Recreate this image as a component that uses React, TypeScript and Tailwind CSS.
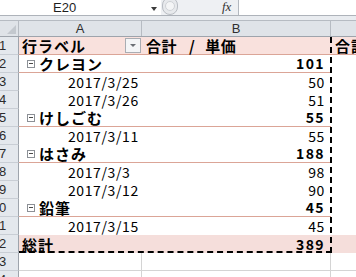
import React from "react";

type Row = { kind: "header" | "group" | "item" | "total" | "blank"; label?: string; val?: string };

const rows: Row[] = [
  { kind: "header" },
  { kind: "group", label: "クレヨン", val: "101" },
  { kind: "item", label: "2017/3/25", val: "50" },
  { kind: "item", label: "2017/3/26", val: "51" },
  { kind: "group", label: "けしごむ", val: "55" },
  { kind: "item", label: "2017/3/11", val: "55" },
  { kind: "group", label: "はさみ", val: "188" },
  { kind: "item", label: "2017/3/3", val: "98" },
  { kind: "item", label: "2017/3/12", val: "90" },
  { kind: "group", label: "鉛筆", val: "45" },
  { kind: "item", label: "2017/3/15", val: "45" },
  { kind: "total", label: "総計", val: "389" },
  { kind: "blank" },
  { kind: "blank" },
];

const labels = ["1", "2", "3", "4", "5", "6", "7", "8", "9", "0", "1", "2", "3", "4"];

const jp = { fontFamily: '"Noto Sans CJK JP", "Noto Sans", sans-serif' };

function Minus() {
  return (
    <span className="mr-[4px] inline-flex h-[8px] w-[8px] items-center justify-center border border-[#8c9096] bg-white">
      <span className="h-[1px] w-[4px] bg-[#4a4a4a]" />
    </span>
  );
}

function DataRow({ r, idx }: { r: Row; idx: number }) {
  const rowHead = (
    <div className="relative h-[18px] w-[19px] shrink-0 overflow-hidden border-b border-r border-b-[#c9ced5] border-r-[#9ea4ac] bg-[#e4e8ed]">
      <span
        className="absolute left-[-1px] top-[1px] text-[13px] leading-[16px] text-[#2b2b2b]"
        style={{ fontFamily: '"Liberation Sans", sans-serif' }}
      >
        {labels[idx]}
      </span>
    </div>
  );

  if (r.kind === "header") {
    return (
      <div className="flex h-[18px]">
        {rowHead}
        <div className="flex h-[18px] w-[123px] shrink-0 items-center justify-between border-b border-[#dba597] bg-[#f9e1dd] pl-[3px] pr-[1px]">
          <span className="text-[15px] font-bold leading-[17px] tracking-[1px] text-black" style={jp}>
            行ラベル
          </span>
          <span className="flex h-[15px] w-[16px] items-center justify-center border border-[#a9adb3] bg-[#f4f5f7]">
            <span className="h-0 w-0 border-x-[3px] border-t-[3px] border-x-transparent border-t-[#6b6f75]" />
          </span>
        </div>
        <div className="flex h-[18px] w-[189px] shrink-0 items-center border-b border-[#dba597] bg-[#f9e1dd] pl-[4px]">
          <span className="flex items-center text-[15px] font-bold leading-[17px] tracking-[0.5px] text-black" style={jp}>
            <span>合計</span>
            <span className="ml-[12px] mr-[10px]">/</span>
            <span>単価</span>
          </span>
        </div>
        <div className="flex h-[18px] flex-1 items-center overflow-hidden whitespace-nowrap border-b border-[#dba597] bg-[#f9e1dd] pl-[4px]">
          <span className="text-[15px] font-bold leading-[17px] tracking-[1px] text-black" style={jp}>
            合計
          </span>
        </div>
      </div>
    );
  }

  if (r.kind === "blank") {
    return (
      <div className="flex h-[18px]">
        {rowHead}
        <div className="h-[18px] w-[123px] shrink-0 border-b border-r border-[#d4d4d4] bg-white" />
        <div className="h-[18px] w-[189px] shrink-0 border-b border-r border-[#d4d4d4] bg-white" />
        <div className="h-[18px] flex-1 border-b border-[#d4d4d4] bg-white" />
      </div>
    );
  }

  const isGroup = r.kind === "group";
  const isTotal = r.kind === "total";
  const bg = isTotal ? "bg-[#f5dedb]" : "bg-white";
  const line = isGroup ? "border-b border-[#dba597]" : "";

  return (
    <div className="flex h-[18px]">
      {rowHead}
      <div className={`flex h-[18px] w-[123px] shrink-0 items-center ${bg} ${line} ${isTotal ? "pl-[3px]" : isGroup ? "pl-[8px]" : "pl-[49px]"}`}>
        {isGroup && <Minus />}
        <span
          className={`whitespace-nowrap text-black ${isGroup || isTotal ? "text-[15px] font-bold tracking-[1px]" : "text-[14px] tracking-[0.6px]"} leading-[17px]`}
          style={jp}
        >
          {r.label}
        </span>
      </div>
      <div className={`flex h-[18px] w-[189px] shrink-0 items-center justify-end pr-[6px] ${bg} ${line}`}>
        <span
          className={`text-black ${isGroup || isTotal ? "text-[14px] font-bold tracking-[1.4px]" : "text-[14px] tracking-[0.6px]"} leading-[17px]`}
          style={jp}
        >
          {r.val}
        </span>
      </div>
      <div className={`h-[18px] flex-1 ${isTotal ? "bg-[#f5dedb]" : "bg-white"}`} />
    </div>
  );
}

export default function App() {
  return (
    <div className="h-[277px] w-[356px] overflow-hidden bg-white">
      {/* formula bar */}
      <div className="flex h-[16px] border-b border-[#aeb3ba] bg-white">
        <div className="relative h-[15px] w-[161px] shrink-0">
          <span
            className="absolute left-[53px] top-[1px] text-[13px] leading-[14px] text-[#1e1e1e]"
            style={{ fontFamily: '"Liberation Sans", sans-serif' }}
          >
            E20
          </span>
          <span className="absolute left-[151px] top-[7px] h-0 w-0 border-x-[3px] border-t-[4px] border-x-transparent border-t-[#3c3c3c]" />
        </div>
        <div className="relative flex h-[15px] w-[77px] shrink-0 items-center bg-[#eef0f3]">
          <span className="absolute left-[1px] top-[-3px] flex h-[18px] w-[16px] items-center justify-center rounded-full border border-[#b9bdc3] bg-[#e7e9ec]">
            <span className="h-[10px] w-[10px] rounded-full border border-[#cfd2d6] bg-[#f4f5f6]" />
          </span>
          <span
            className="absolute left-[61px] top-[0px] text-[13px] italic leading-[14px] text-[#333]"
            style={{ fontFamily: '"Liberation Serif", serif' }}
          >
            fx
          </span>
        </div>
        <div className="h-[15px] flex-1 border-l border-[#b3b8bf] bg-white" />
      </div>
      {/* band */}
      <div className="h-[5px] border-b border-[#b6bbc2] bg-[#e9ecf0]" />
      {/* column header */}
      <div className="flex h-[16px] border-b border-[#9ea4ac] bg-[#dfe3e8]">
        <div className="relative h-[15px] w-[19px] shrink-0 border-r border-[#b6bbc2]">
          <span className="absolute bottom-[2px] right-[2px] h-0 w-0 border-b-[9px] border-l-[9px] border-b-[#c3c8ce] border-l-transparent" />
        </div>
        <div
          className="flex h-[15px] w-[123px] shrink-0 items-center justify-center border-r border-[#b6bbc2] text-[13px] text-[#2f2f2f]"
          style={{ fontFamily: '"Liberation Sans Narrow", "Liberation Sans", sans-serif' }}
        >
          A
        </div>
        <div
          className="flex h-[15px] w-[189px] shrink-0 items-center justify-center border-r border-[#b6bbc2] text-[13px] text-[#2f2f2f]"
          style={{ fontFamily: '"Liberation Sans Narrow", "Liberation Sans", sans-serif' }}
        >
          B
        </div>
        <div className="h-[15px] flex-1" />
      </div>
      {/* grid */}
      <div className="relative">
        {rows.map((r, i) => (
          <DataRow key={i} r={r} idx={i} />
        ))}
        <div className="pointer-events-none absolute left-[19px] top-0 h-[216px] w-[313px] border-b-2 border-r-2 border-dashed border-black" />
      </div>
    </div>
  );
}
